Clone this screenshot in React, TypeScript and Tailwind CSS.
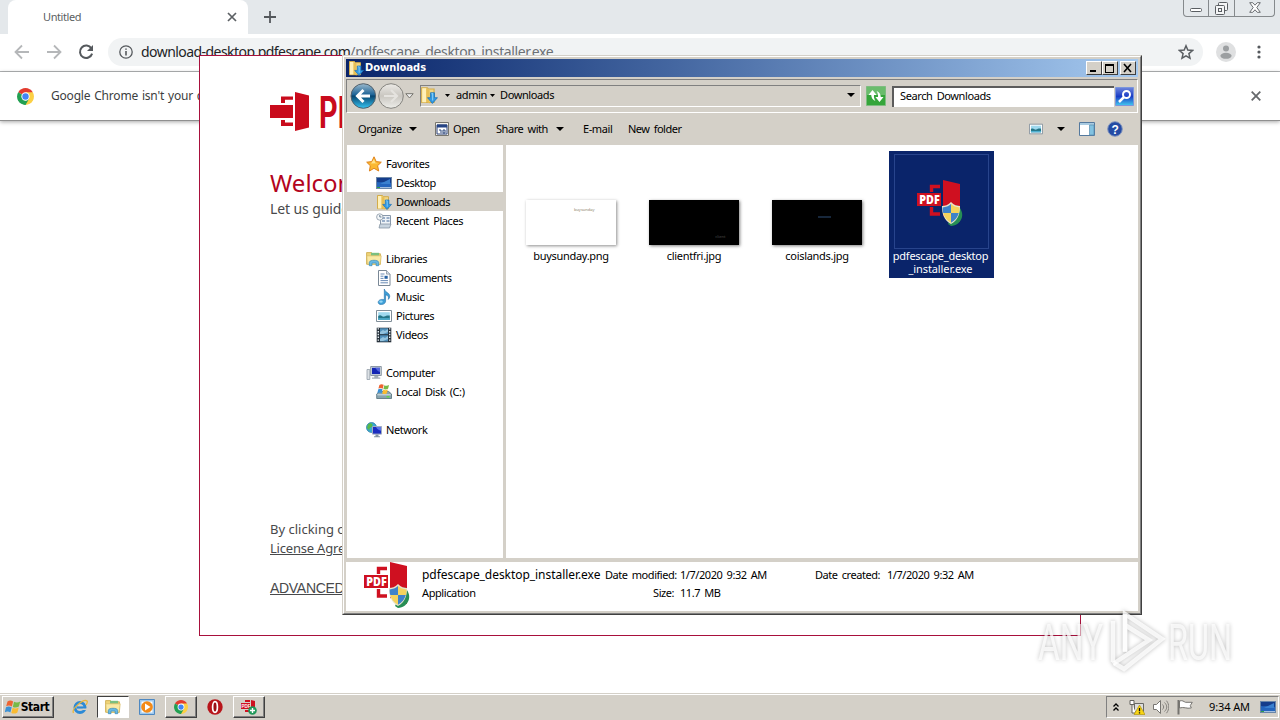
import type { ReactNode } from 'react';
import clsx from 'clsx';

interface BoxProps {
  children?: ReactNode;
  className?: string;
}

// 16x16 icon frame shared by the small glyphs
const Glyph = ({ children, className }: BoxProps) => (
  <svg viewBox="0 0 16 16" className={clsx('shrink-0', className ?? 'h-4 w-4')}>
    {children}
  </svg>
);

const StarIcon = () => (
  <Glyph>
    <path d="M8 .8 10.2 5.6 15.3 6.2 11.6 9.7 12.7 15 8 12.3 3.4 15 4.3 9.7.7 6.2 5.8 5.6Z" fill="#fbb830" stroke="#df831c" strokeWidth="1" />
    <path d="M8 3 9.3 6.7 12 7.2 5 7.5Z" fill="#ffe38b" />
  </Glyph>
);

const DesktopIcon = ({ className }: BoxProps) => (
  <Glyph className={className}>
    <rect x=".5" y="2.5" width="15" height="11" fill="#2465bd" stroke="#6a86a8" />
    <path d="M1 3h14v5C10 6 5 8 1 7Z" fill="#153d8b" />
    <path d="M4 9 14 4v5Z" fill="#3a80cf" />
    <path d="M1 12.5h14" stroke="#a4bfe0" />
    <path d="M1 12.5h3" stroke="#31a049" />
  </Glyph>
);

const DownloadsIcon = ({ className }: BoxProps) => (
  <Glyph className={className}>
    <path d="M1.5 1.5h5l1 1.2h5v12h-11Z" fill="#f0d685" stroke="#d3ac49" />
    <path d="M2 2h3.5v12.5H2Z" fill="#fff0b8" />
    <path d="m5.5 2 3 1.5v12l-3-1.5Z" fill="#e8bf55" />
    <path d="M9.3 6h3.6v4.4h2.6L11 15.5 6.7 10.4h2.6Z" fill="#3099e3" stroke="#1c73b7" strokeWidth=".7" />
    <path d="M10.2 6.8h1v6" stroke="#82cbf6" fill="none" />
  </Glyph>
);

const RecentIcon = () => (
  <Glyph>
    <path d="M4.5 2.5h10v9h-10Z" fill="#eef3f8" stroke="#8999ab" />
    <path d="M6 5h3M10.5 5h3M6 8h3M10.5 8h3" stroke="#7e98b8" strokeWidth="1.6" />
    <path d="M4 11h11l-1.5 4H3Z" fill="#c8d4df" stroke="#7b8b9b" strokeWidth=".7" />
    <circle cx="3.8" cy="4" r="3.2" fill="#f4f7f9" stroke="#8996a3" strokeWidth=".8" />
    <path d="M3.8 2v2h1.7" stroke="#486482" fill="none" strokeWidth=".8" />
  </Glyph>
);

const LibrariesIcon = ({ className }: BoxProps) => (
  <Glyph className={className}>
    <path d="M.6 1.6h5l1 1.2h7.8v10.4H.6Z" fill="#efd477" stroke="#cfae51" strokeWidth=".9" />
    <path d="M5 1.8h8v3H5Z" fill="#7bbf7f" />
    <path d="M.8 4.8h14.4l-.9 8.5H1.3Z" fill="#fae9a4" stroke="#d8ba62" strokeWidth=".7" />
    <path d="M3.3 14.7v-3.2c0-3 9.4-3 9.4 0v3.2h-2.6v-2.6H6v2.6Z" fill="#67b9e4" stroke="#3588b9" strokeWidth=".7" />
  </Glyph>
);

const DocumentIcon = () => (
  <Glyph>
    <path d="M2.5.5h8l3.5 3.6v11.4H2.5Z" fill="#fff" stroke="#7a8896" />
    <path d="M10.5.5v3.6H14" fill="#d2dce7" stroke="#7a8896" strokeWidth=".7" />
    <path d="M4.5 4h4M4.5 6.2h3M4.5 8.4h3M4.5 10.6H12M4.5 12.8H12" stroke="#698bb5" />
    <path d="M8.5 5.8h3.2v3H8.5Z" fill="#2763a4" />
  </Glyph>
);

const MusicIcon = () => (
  <Glyph>
    <path d="M8.3 0c.5 3.5 5.7 3.4 5.4 7.7-.1 1.2-.7 2-1.4 2.7.6-2.6-.3-4-2.7-4.7v6.4c0 4.1-7.4 4.7-7.4 1.2 0-2.4 3.4-3.6 6.1-2.5Z" fill="#3d9fd7" stroke="#1c6ba7" strokeWidth=".6" />
    <ellipse cx="5" cy="12.7" rx="1.8" ry="1.1" fill="#94d6f6" />
  </Glyph>
);

const PicturesIcon = ({ className }: BoxProps) => (
  <Glyph className={className}>
    <path d="M.5 2.5h15v11H.5Z" fill="#fff" stroke="#808e99" />
    <path d="M2.2 4.2h11.6v7.6H2.2Z" fill="#9fd9ee" />
    <path d="M2.2 8c3-2 4 1.5 6 .6s3-1.6 5.6-1v4.2H2.2Z" fill="#247587" />
    <path d="M2.2 10.2h11.6v1.6H2.2Z" fill="#4fafd0" />
  </Glyph>
);

const VideosIcon = () => (
  <Glyph>
    <path d="M.7.7h14.6v14.6H.7Z" fill="#26303a" />
    <path d="M4 1.2h8v6H4ZM4 8.3h8v6.2H4Z" fill="#508fba" />
    <path d="m4 5 3-2 2 1 3-2v3L7 7H4Zm0 7 3-2 2 1 3-2v3l-5 2H4Z" fill="#94c3de" />
    <path d="M2.3 1.2v14M13.7 1.2v14" stroke="#e7eff4" strokeWidth="1.4" strokeDasharray="1.4 1.4" />
  </Glyph>
);

const ComputerIcon = () => (
  <Glyph>
    <path d="M4.7 1.5h10.6v9H4.7Z" fill="#cdd5dd" stroke="#8d99a5" />
    <path d="M6 2.8h8v6.3H6Z" fill="#1425b4" />
    <path d="M9 2.8h5V7C12 7 11 5 9 2.8Z" fill="#5366da" />
    <path d="M8.3 11h4v1.6h2v1.2H6v-1.2h2.3Z" fill="#a3adb8" />
    <path d="M1 4.5h2.8v10H1Z" fill="#dce1e5" stroke="#949faa" strokeWidth=".8" />
  </Glyph>
);

const FlagPanes = () => (
  <g>
    <path d="M2.5 2.5C4.6 1 6.3 1.4 8.1 2.4L6.9 7.5C5 6.4 3.2 6.2 1.2 7.3Z" fill="#ee6432" />
    <path d="M9 2.8c2 1 4.1 1 6.2-.3l-1.3 5c-2 1.2-4.1 1.4-6.1.4Z" fill="#77b947" />
    <path d="M1 8.2c2-1.2 3.9-.9 5.7.1l-1.3 5.1c-1.9-1.1-3.7-1.3-5.7 0Z" fill="#3b91d5" />
    <path d="M7.6 8.7c2 1 4 .9 6.1-.3l-1.3 5c-2.1 1.4-4.2 1.5-6.1.5Z" fill="#f9bb32" />
  </g>
);

const DiskIcon = () => (
  <Glyph>
    <path d="m.7 10 3-2.5h9l2.8 2.5v4.5H.7Z" fill="#89a4af" stroke="#536e79" strokeWidth=".8" />
    <path d="M1.3 10.8h13.5" stroke="#d3e2e7" />
    <path d="M10.5 12.8h3" stroke="#59d949" strokeWidth="1.5" />
    <g transform="translate(1.5 -1) scale(.76)">
      <FlagPanes />
    </g>
  </Glyph>
);

const NetworkIcon = () => (
  <Glyph>
    <circle cx="5.5" cy="5.5" r="5" fill="#38a8d4" stroke="#24759d" strokeWidth=".7" />
    <path d="M2 2.5C5-.5 8 2 5.8 4.7 4.8 6 2.7 5 3.7 8.8L1 6Z" fill="#58b947" />
    <path d="M6.5 4.5h9v7.6h-9Z" fill="#1b2cc0" stroke="#a0acc0" />
    <path d="M10 5h5v3.7C13 8.5 11 7 10 5Z" fill="#5c75e8" />
    <path d="M9.5 12.5h3v1.8h1.5v1H8v-1h1.5Z" fill="#8493a3" />
  </Glyph>
);

const ChromeLogo = ({ className }: BoxProps) => (
  <Glyph className={className}>
    <path d="M8 8 1.1 4A8 8 0 0 1 14.9 4Z" fill="#e33b2e" />
    <path d="M8 8 14.9 4A8 8 0 0 1 8 16Z" fill="#fcd045" />
    <path d="M8 8v8A8 8 0 0 1 1.1 4Z" fill="#22a052" />
    <path d="M8 4h6.9l-3.4 6L8 16l3.4-6Z" fill="#fcd045" />
    <path d="m4.6 10 3.4 2 3.4-2L8 16A8 8 0 0 1 2 7Z" fill="#22a052" />
    <circle cx="8" cy="8" r="3.9" fill="#fff" />
    <circle cx="8" cy="8" r="3" fill="#4285f4" />
  </Glyph>
);

const Shield = () => (
  <g>
    <path d="M40 27c4 3 6 8 5 12-1 5-6 9-11 9l-3-2Z" fill="#278e55" />
    <path d="M34 24c3 3 6 4 9 4 0 8-2 14-9 18-7-4-9-10-9-18 3 0 6-1 9-4Z" fill="#e9e4cb" />
    <path d="M34 26v9h-7.7c-.6-2-.7-3.6-.6-5.6 3-.2 5.8-1.2 8.3-3.4ZM34 35h7.8c-1 4-3.5 7.3-7.8 9.8Z" fill="#3e82ca" />
    <path d="M34 26c2.5 2.2 5.3 3.2 8.4 3.4 0 2 0 3.7-.6 5.6H34ZM34 35v9.8c-4.3-2.5-6.7-5.8-7.7-9.8Z" fill="#f5d35d" />
  </g>
);

const InstallerIcon = ({ className }: BoxProps) => (
  <svg viewBox="0 0 48 48" className={className}>
    <path d="M26 0 43 4v38l-17-6Z" fill="#cf1020" />
    <path d="M14.500 12V6.500H23M14.500 27v7H23" fill="none" stroke="#cf1020" strokeWidth="3.4" />
    <path d="M0 13h24v13H0Z" fill="#cf1020" />
    <text x="2.2" y="23.8" fontFamily="Open Sans, sans-serif" fontWeight="800" fontSize="12" letterSpacing="0" textLength="20.5" lengthAdjust="spacingAndGlyphs" fill="#fff">
      PDF
    </text>
    <g transform="translate(0 -2)">
      <Shield />
    </g>
  </svg>
);

const Caret = ({ className }: BoxProps) => (
  <svg viewBox="0 0 8 4" className={clsx('h-1 w-2 shrink-0', className)}>
    <path d="M0 0h8L4 4Z" fill="currentColor" />
  </svg>
);

const SmallCaret = ({ className }: BoxProps) => (
  <svg viewBox="0 0 5 3" className={clsx('h-[3px] w-[5px] shrink-0', className)}>
    <path d="M0 0h5L2.5 3Z" fill="currentColor" />
  </svg>
);

const CaptionButton = ({ children, className }: BoxProps) => (
  <div className={clsx('flex h-[14px] w-4 items-center justify-center border border-t-white border-l-white border-r-[#404040] border-b-[#404040] bg-[#d4d0c8]', className)}>
    <svg viewBox="0 0 12 10" className="h-[10px] w-3" fill="none" stroke="#000" shapeRendering="crispEdges">
      {children}
    </svg>
  </div>
);

const ChromeWindow = () => (
  <div className="flex h-[693px] flex-col bg-white">
    <div className="flex h-[34px] bg-[#e4e8eb] pl-2">
      <div className="flex w-60 items-center justify-between rounded-t-lg bg-white pr-[11px] pl-[35px]">
        <span className="text-[#5c5f62]">Untitled</span>
        <svg viewBox="0 0 10 10" className="h-[10px] w-[10px]" stroke="#5c6064" strokeWidth="1.7">
          <path d="m1 1 8 8M9 1 1 9" />
        </svg>
      </div>
      <svg viewBox="0 0 12 12" className="mt-[11px] ml-4 h-3 w-3" stroke="#54585c" strokeWidth="1.8">
        <path d="M6 0v12M0 6h12" />
      </svg>
      <div className="mr-[5px] ml-auto flex h-[17px] w-[92px] rounded-b-[4px] border border-t-0 border-[#85898c] text-[#5a5e62]">
        <div className="flex w-[25px] justify-center border-r border-[#85898c]">
          <svg viewBox="0 0 12 4" className="mt-2 h-1 w-3" fill="#fff" stroke="currentColor">
            <rect x=".5" y=".5" width="11" height="3" rx="1" />
          </svg>
        </div>
        <div className="flex w-[26px] justify-center border-r border-[#85898c]">
          <svg viewBox="0 0 13 13" className="mt-[2px] h-[13px] w-[13px]" fill="#f4f5f6" stroke="currentColor">
            <rect x="3.5" y=".5" width="9" height="8" rx="1" />
            <rect x=".5" y="3.5" width="9" height="9" rx="1" />
            <rect x="3.5" y="6.5" width="3" height="3" />
          </svg>
        </div>
        <div className="flex grow justify-center">
          <svg viewBox="0 0 12 11" className="mt-[2px] h-[11px] w-3" fill="#fff" stroke="currentColor" strokeWidth=".9">
            <path d="M.7.7h3L6 3.2 8.3.7h3L7.8 5.5l3.5 4.8h-3L6 7.8l-2.3 2.5h-3l3.5-4.8Z" />
          </svg>
        </div>
      </div>
    </div>
    <div className="flex h-[38px] items-center border-b border-[#b3b5b7] pb-px pl-[14px]">
      <svg viewBox="0 0 16 16" className="h-4 w-4" fill="none" stroke="#b5b7b9" strokeWidth="1.8">
        <path d="M15 8H2M8 1.5 1.5 8 8 14.5" />
      </svg>
      <svg viewBox="0 0 16 16" className="ml-4 h-4 w-4" fill="none" stroke="#b5b7b9" strokeWidth="1.8">
        <path d="M1 8h13M8 1.5 14.5 8 8 14.5" />
      </svg>
      <svg viewBox="0 0 16 16" className="ml-4 h-4 w-4" fill="none" stroke="#55595d" strokeWidth="2">
        <path d="M13.4 4.4A6.2 6.2 0 1 0 14.1 9.6" />
        <path d="M15 1v6H9Z" fill="#55595d" stroke="none" />
      </svg>
      <div className="ml-[14px] flex h-7 w-[1095px] items-center rounded-full bg-[#f1f3f4] pr-[9px] pl-[11px]">
        <svg viewBox="0 0 14 14" className="h-[14px] w-[14px]" fill="none" stroke="#55595d" strokeWidth="1.3">
          <circle cx="7" cy="7" r="6.2" />
          <path d="M7 6v4.5M7 3.4v1.4" strokeWidth="1.6" />
        </svg>
        <span className="ml-2 text-[14px] tracking-[-0.55px] whitespace-nowrap text-[#222426]">
          download-desktop.pdfescape.com<span className="tracking-[-0.38px] text-[#6c7075]">/pdfescape_desktop_installer.exe</span>
        </span>
        <svg viewBox="0 0 16 16" className="ml-auto h-4 w-4" fill="none" stroke="#5a5e62" strokeWidth="1.5">
          <path d="m8 1.8 1.8 4.3 4.7.4-3.6 3.1 1.1 4.6L8 11.8l-4 2.4 1.1-4.6-3.6-3.1 4.7-.4Z" />
        </svg>
      </div>
      <svg viewBox="0 0 20 20" className="ml-[13px] h-5 w-5">
        <circle cx="10" cy="10" r="10" fill="#dfe0e1" />
        <circle cx="10" cy="6.5" r="3" fill="#9c9fa1" />
        <ellipse cx="10" cy="13.8" rx="5.6" ry="3" fill="#9c9fa1" />
      </svg>
      <svg viewBox="0 0 4 14" className="ml-[21px] h-[14px] w-1" fill="#55595d">
        <circle cx="2" cy="2" r="1.6" />
        <circle cx="2" cy="7" r="1.6" />
        <circle cx="2" cy="12" r="1.6" />
      </svg>
    </div>
    <div className="flex h-[49px] items-center border-b border-[#8f8f8f] pr-[19px] pl-[17px] shadow-[0_1px_4px_rgba(0,0,0,0.35)]">
      <ChromeLogo className="h-[17px] w-[17px]" />
      <span className="ml-[17px] text-[12px] tracking-[-0.2px] [word-spacing:1px] whitespace-nowrap text-[#3c3e40]">Google Chrome isn't your default browser</span>
      <svg viewBox="0 0 10 10" className="ml-auto h-[10px] w-[10px]" stroke="#66696c" strokeWidth="1.8">
        <path d="m.7.7 8.6 8.6M9.3.7.7 9.3" />
      </svg>
    </div>
  </div>
);

const SetupWindow = () => (
  <div className="absolute top-[55px] left-[199px] flex h-[581px] w-[882px] flex-col border border-[#a8103c] bg-white pl-[70px] tracking-normal text-[#48494b] [word-spacing:0px]">
    <div className="mt-9 flex h-10">
      <svg viewBox="0 0 40 40" className="h-10 w-10" fill="#c90b1c">
        <path d="M25 0 39 3.5v32L25 39Z" />
        <path d="M0 13h23v13H0Z" />
        <path d="M11 11V4.5h12v3.3h-8V11ZM11 28v6h12v-3.4h-8V28Z" />
      </svg>
      <svg viewBox="0 0 150 40" className="ml-[9px] h-10 w-[150px]">
        <text x="0" y="36" fontFamily="Roboto, sans-serif" fontWeight="700" fontSize="45" textLength="146" lengthAdjust="spacingAndGlyphs" fill="#c90b1c">
          PDFescape
        </text>
      </svg>
    </div>
    <h1 className="mt-[35px] h-8 text-[24px] leading-8 text-[#b30420]">Welcome</h1>
    <p className="h-5 text-[14px] leading-5 tracking-[-0.1px]">Let us guide you</p>
    <p className="mt-[300px] h-5 text-[13px] leading-5">By clicking on</p>
    <p className="h-5 text-[13px] leading-[19px] tracking-[-0.2px] underline">License Agreement</p>
    <p className="mt-[19px] h-5 font-['Liberation_Sans'] text-[14px] leading-5 tracking-[-0.3px] underline">ADVANCED</p>
  </div>
);

const navGroups = [
  {
    label: 'Favorites',
    icon: <StarIcon />,
    items: [
      { label: 'Desktop', icon: <DesktopIcon /> },
      { label: 'Downloads', icon: <DownloadsIcon />, active: true },
      { label: 'Recent Places', icon: <RecentIcon /> },
    ],
  },
  {
    label: 'Libraries',
    icon: <LibrariesIcon />,
    items: [
      { label: 'Documents', icon: <DocumentIcon /> },
      { label: 'Music', icon: <MusicIcon /> },
      { label: 'Pictures', icon: <PicturesIcon /> },
      { label: 'Videos', icon: <VideosIcon /> },
    ],
  },
  { label: 'Computer', icon: <ComputerIcon />, items: [{ label: 'Local Disk (C:)', icon: <DiskIcon /> }] },
  { label: 'Network', icon: <NetworkIcon />, items: [] },
];

const NavPane = () => (
  <div className="flex w-[156px] flex-col gap-[19px] bg-white pt-[9px]">
    {navGroups.map((group) => (
      <div key={group.label}>
        <div className="flex h-[19px] items-center gap-1 pl-[19px]">
          {group.icon}
          <span>{group.label}</span>
        </div>
        {group.items.map((item) => (
          <div key={item.label} className={clsx('flex h-[19px] items-center gap-1 pl-[29px]', 'active' in item && item.active && 'bg-[#d4d0c8]')}>
            {item.icon}
            <span>{item.label}</span>
          </div>
        ))}
      </div>
    ))}
  </div>
);

const FileTile = ({ name, children }: { name: string; children: ReactNode }) => (
  <div className="flex h-[127px] w-[105px] flex-col items-center">
    <div className="flex h-[98px] items-end pb-[4px]">{children}</div>
    <span className="ml-px h-[13px] leading-[13px] tracking-[-0.3px]">{name}</span>
  </div>
);

const FilePane = () => (
  <div className="flex grow gap-[18px] bg-white pt-[6px] pl-[12px]">
    <FileTile name="buysunday.png">
      <div className="flex h-[45px] w-[90px] justify-end bg-white pt-[7px] pr-[21px] text-[4px] leading-[5px] tracking-normal text-[#8b8167] shadow-[1px_1px_3px_rgba(0,0,0,0.45)]">buysunday</div>
    </FileTile>
    <FileTile name="clientfri.jpg">
      <div className="flex h-[45px] w-[90px] items-end justify-end bg-black pr-[13px] pb-[6px] text-[4px] leading-[5px] tracking-normal text-[#4b4b4b] shadow-[1px_1px_3px_rgba(0,0,0,0.5)]">client</div>
    </FileTile>
    <FileTile name="coislands.jpg">
      <div className="flex h-[45px] w-[90px] justify-center bg-black pt-4 pl-4 shadow-[1px_1px_3px_rgba(0,0,0,0.5)]">
        <div className="h-[2px] w-[13px] bg-[#17273b]" />
      </div>
    </FileTile>
    <div className="ml-[2px] flex h-[127px] w-[105px] flex-col items-center bg-[#0a246a] pt-[3px] text-white">
      <div className="mr-[1px] flex h-[95px] w-[95px] items-center justify-center border border-[#28448c]">
        <InstallerIcon className="mt-1 h-12 w-12" />
      </div>
      <span className="mr-[2px] leading-[13px] tracking-[-0.25px]">pdfescape_desktop</span>
      <span className="mr-[2px] leading-[13px] tracking-[-0.1px]">_installer.exe</span>
    </div>
  </div>
);

const ExplorerWindow = () => (
  <div className="absolute top-[55px] left-[342px] flex h-[560px] w-[800px] flex-col border border-t-[#d4d0c8] border-r-[#404040] border-b-[#404040] border-l-[#d4d0c8] bg-[#d4d0c8] whitespace-nowrap text-black">
    <div className="flex grow flex-col border border-t-white border-r-[#808080] border-b-[#808080] border-l-white p-[2px]">
      <div className="flex h-[18px] items-center bg-linear-to-r from-[#0a246a] to-[#a6caf0] pr-[2px] pl-[2px]">
        <DownloadsIcon />
        <span className="ml-[1px] font-['DejaVu_Sans_Condensed','Noto_Sans'] text-[11px] font-bold tracking-normal text-white">Downloads</span>
        <CaptionButton className="ml-auto">
          <path d="M2 8h6" strokeWidth="2" />
        </CaptionButton>
        <CaptionButton>
          <path d="M1.5 1v8.5h8V1M1 1h9" strokeWidth="1" />
          <path d="M1 1.5h9" strokeWidth="2" />
        </CaptionButton>
        <CaptionButton className="ml-[2px]">
          <path d="m2 1 7 8M9 1 2 9" strokeWidth="1.6" shapeRendering="auto" />
        </CaptionButton>
      </div>
      <div className="mt-[2px] flex h-[34px] items-center border border-[#808080] border-r-white border-b-white pl-[3px]">
        <svg viewBox="0 0 54 28" className="h-7 w-[54px] shrink-0">
          <defs>
            <linearGradient id="back" x2="0" y2="1">
              <stop offset="0" stopColor="#9ab9cd" />
              <stop offset=".45" stopColor="#1d6396" />
              <stop offset=".5" stopColor="#07446f" />
              <stop offset="1" stopColor="#35c4f2" />
            </linearGradient>
            <linearGradient id="fwd" x2="0" y2="1">
              <stop offset="0" stopColor="#eceae6" />
              <stop offset=".5" stopColor="#c9c6c0" />
              <stop offset="1" stopColor="#eeeeea" />
            </linearGradient>
          </defs>
          <circle cx="13.3" cy="14" r="12.3" fill="url(#back)" stroke="#53606b" />
          <circle cx="41" cy="14" r="12.3" fill="url(#fwd)" stroke="#85847f" />
          <path d="M20 14H8m5.5-6-6 6 6 6" fill="none" stroke="#fff" strokeWidth="3" />
          <path d="M34 14h13m-6-6 6 6-6 6" fill="none" stroke="#e5e3df" strokeWidth="2.2" />
        </svg>
        <svg viewBox="0 0 9 6" className="ml-[1px] h-[6px] w-[9px] shrink-0" fill="#eee" stroke="#77756f">
          <path d="M.8.7h7.4L4.5 5Z" />
        </svg>
        <div className="ml-[6px] flex h-[22px] w-[441px] shrink-0 items-center border border-[#808080] border-r-white border-b-white pr-[5px] pb-[2px]">
          <DownloadsIcon className="-ml-px h-[18px] w-[18px]" />
          <SmallCaret className="ml-[7px]" />
          <span className="ml-[6px] w-[30px]">admin</span>
          <SmallCaret className="ml-[4px]" />
          <span className="ml-[5px]">Downloads</span>
          <Caret className="ml-auto" />
        </div>
        <svg viewBox="0 0 20 20" className="ml-[5px] h-5 w-5 shrink-0">
          <path d="M.5.5h19v19H.5Z" fill="#35a53a" stroke="#7ebc80" />
          <path d="M1 1h18v8H1Z" fill="#6abc6c" />
          <path d="M6.5 4 2.5 9h2.7c.2 3 1.5 4.7 4.2 6C8 12.5 7.8 11 8 9h2.6ZM13.5 16l4-5h-2.7c-.2-3-1.5-4.7-4.2-6C12 7.5 12.2 9 12 11H9.4Z" fill="#fff" />
        </svg>
        <div className="ml-[6px] flex h-[21px] w-[222px] shrink-0 items-center border-t-2 border-l-2 border-[#5c5c5c] bg-white pb-[2px] pl-[6px]">Search Downloads</div>
        <svg viewBox="0 0 19 19" className="ml-[1px] h-[19px] w-[19px] shrink-0">
          <defs>
            <linearGradient id="find" x2="0" y2="1">
              <stop stopColor="#6f86dc" />
              <stop offset=".5" stopColor="#183bc4" />
              <stop offset="1" stopColor="#42caf0" />
            </linearGradient>
          </defs>
          <path d="M.5.5h18v18H.5Z" fill="url(#find)" stroke="#7b96dc" />
          <circle cx="11.5" cy="7.5" r="3.5" fill="none" stroke="#fff" strokeWidth="2" />
          <path d="m9 10-5 5" stroke="#fff" strokeWidth="2.5" />
        </svg>
      </div>
      <div className="flex h-8 items-center pr-[15px] pl-3">
        <span className="w-[44px]">Organize</span>
        <Caret className="ml-[7px]" />
        <svg viewBox="0 0 14 14" className="ml-[18px] h-[14px] w-[14px]">
          <path d="M.5.5h13v13H.5Z" fill="#f3f2ec" stroke="#77756e" />
          <path d="M2 3h10v9H2Z" fill="#fff" stroke="#2c437b" />
          <path d="M2 2.5h10v3H2Z" fill="#254384" />
          <path d="M4 8h2v3M8 8h2v3H8Z" fill="none" stroke="#28447b" />
        </svg>
        <span className="ml-[4px] w-[43px]">Open</span>
        <span className="w-[52px] tracking-[-0.45px]">Share with</span>
        <Caret className="ml-2" />
        <span className="ml-[19px] w-[45px]">E-mail</span>
        <span className="tracking-[-0.5px]">New folder</span>
        <PicturesIcon className="ml-auto h-[14px] w-[14px]" />
        <Caret className="ml-[14px]" />
        <svg viewBox="0 0 16 14" className="ml-[14px] h-[14px] w-4">
          <path d="M.5.5h15v13H.5Z" fill="#fff" stroke="#54799e" />
          <path d="M1 1h14v2H1Z" fill="#a9cbe1" />
          <path d="M10.5 3h4.5v10h-4.5Z" fill="#82c2e1" stroke="#588eaf" strokeWidth=".7" />
        </svg>
        <svg viewBox="0 0 16 16" className="ml-3 h-4 w-4">
          <circle cx="8" cy="8" r="7.3" fill="#244ba4" stroke="#8396bf" />
          <text x="8" y="12.5" textAnchor="middle" fontFamily="Liberation Sans, sans-serif" fontWeight="bold" fontSize="12" fill="#fff">?</text>
        </svg>
      </div>
      <div className="flex h-[413px] pl-[1px]">
        <NavPane />
        <div className="w-[3px] bg-[#d4d0c8]" />
        <FilePane />
      </div>
      <div className="mt-[4px] flex h-[49px] bg-white pl-[18px]">
        <InstallerIcon className="h-12 w-12" />
        <div className="ml-[10px] w-[183px] pt-1">
          <p className="text-[12px] leading-[18px] tracking-[-0.05px]">pdfescape_desktop_installer.exe</p>
          <p className="leading-[18px]">Application</p>
        </div>
        <div className="grid h-[40px] grid-cols-[71px_131px_68px_100px] content-start gap-x-1 pt-[4px] leading-[18px] tracking-[-0.45px]">
          <span className="pr-[2px] text-right">Date modified:</span>
          <span>1/7/2020 9:32 AM</span>
          <span>Date created:</span>
          <span>1/7/2020 9:32 AM</span>
          <span className="pr-[2px] text-right">Size:</span>
          <span>11.7 MB</span>
        </div>
      </div>
    </div>
  </div>
);

const Watermark = () => (
  <svg viewBox="0 0 204 70" className="absolute top-[605px] left-[1034px] h-[70px] w-[204px] drop-shadow-[0_0_2px_rgba(0,0,0,0.32)]">
    <g fill="#fff" fillOpacity=".75" fontFamily="Roboto, sans-serif" fontWeight="400" fontSize="50" letterSpacing="0">
      <text x="4" y="55" textLength="65" lengthAdjust="spacingAndGlyphs">ANY</text>
      <text x="134" y="55" textLength="64" lengthAdjust="spacingAndGlyphs">RUN</text>
    </g>
    <g fill="none" stroke="#fff" strokeOpacity=".8" strokeWidth="4.5">
      <path d="M79 57V16M91 46V9l37 25-38 30-10-6" />
      <path d="m91 20 24 15-36 24M91 9v38" />
    </g>
  </svg>
);

const TaskButton = ({ children, className }: BoxProps) => (
  <div className={clsx('flex h-[22px] w-8 items-center justify-center border border-t-white border-l-white border-r-[#404040] border-b-[#404040] shadow-[inset_-1px_-1px_0_#808080]', className)}>
    {children}
  </div>
);

const Taskbar = () => (
  <div className="flex h-[27px] items-start border-t border-[#d4d0c8] bg-[#d4d0c8] text-black">
    <div className="flex h-[26px] w-full items-start border-t border-white pt-px">
      <TaskButton className="ml-[2px] w-[52px]! shrink-0 pr-[2px]">
        <Glyph>
          <FlagPanes />
        </Glyph>
        <span className="font-['DejaVu_Sans_Condensed','Noto_Sans'] text-[12px] font-bold tracking-[-0.4px]">Start</span>
      </TaskButton>
      <Glyph className="mt-[3px] ml-[18px] h-4 w-4">
        <circle cx="8" cy="8.5" r="5" fill="none" stroke="#2c8ad6" strokeWidth="3" />
        <path d="M5 8.5h9" stroke="#2c8ad6" strokeWidth="2.2" />
        <path d="M1.5 14C-1 10 12-1 15 2c1 1-.4 3-1 4" fill="none" stroke="#e9b63b" strokeWidth="1.3" />
        <path d="M10 11h5v-1.4h-4Z" fill="#d4d0c8" />
      </Glyph>
      <div className="ml-[9px] flex h-[22px] w-8 items-center justify-center border border-t-[#404040] border-l-[#404040] border-r-white border-b-white bg-white">
        <LibrariesIcon />
      </div>
      <Glyph className="mt-[3px] ml-[10px] h-4 w-4">
        <path d="M.5.5h15v15H.5Z" fill="#9fc9ee" stroke="#4e88c1" />
        <path d="M2.5 2.5h11v11h-11Z" fill="#fff" />
        <circle cx="8" cy="8" r="5.8" fill="#f38a18" />
        <path d="m6 4.5 5.5 3.5L6 11.5Z" fill="#fff" />
      </Glyph>
      <TaskButton className="ml-[10px]">
        <ChromeLogo className="h-[14px] w-[14px]" />
      </TaskButton>
      <Glyph className="mt-[3px] ml-[10px] h-4 w-4">
        <circle cx="8" cy="8" r="7.7" fill="#b8151b" />
        <ellipse cx="8" cy="8" rx="2.4" ry="5.3" fill="#9c1016" stroke="#fff" strokeWidth="1.7" />
      </Glyph>
      <TaskButton className="ml-[10px]">
        <Glyph>
          <path d="M0 4h9v6H0ZM10 1l4 1v12l-4-1ZM4 1h5v2H4ZM4 11h5v2H4Z" fill="#cf1020" />
          <text x=".5" y="9" fontFamily="Liberation Sans, sans-serif" fontWeight="bold" fontSize="4.5" letterSpacing="0" fill="#fff">PDF</text>
          <circle cx="11.5" cy="11.5" r="4.3" fill="#20985a" />
          <path d="M11.5 9v5M9 11.5h5" stroke="#fff" strokeWidth="1.4" />
        </Glyph>
      </TaskButton>
      <div className="mr-px ml-auto flex h-[22px] w-[173px] items-center border border-[#808080] border-r-white border-b-white pl-[6px]">
        <svg viewBox="0 0 6 8" className="h-2 w-[6px]" fill="none" stroke="#000" strokeWidth="1.3">
          <path d="m.5 3.5 2.5-2.5 2.5 2.5M.5 7.5 3 5l2.5 2.5" />
        </svg>
        <Glyph className="ml-[10px] h-4 w-4">
          <path d="M5.5 4.5h9v8h-9Z" fill="#ddd" stroke="#686864" />
          <path d="M1 1.5h4v4H1ZM3 5v9h4" fill="#fff" stroke="#63635f" />
          <path d="M10.5 6 16 15.5H5Z" fill="#f8d413" stroke="#a78b00" strokeWidth=".6" />
          <path d="M10.5 9v3.3M10.5 13.3v1.2" stroke="#111" strokeWidth="1.3" />
        </Glyph>
        <Glyph className="ml-2 h-4 w-4">
          <path d="M.5 5.5h3l4-4v13l-4-4h-3Z" fill="#fff" stroke="#777571" />
          <path d="M9.5 5.5c1.5 1.5 1.5 3.5 0 5M11.5 3.5c3 3 3 6 0 9M13.5 1.7c3 4 3 8.5 0 12.5" fill="none" stroke="#85827d" />
        </Glyph>
        <Glyph className="ml-2 h-4 w-4">
          <path d="M1.5 1v14.5" stroke="#75736f" strokeWidth="2" />
          <path d="M2.5 2c3-1 4 .5 6 1.3h6.8l-2 3.2 1 2.5c-5 1-7-1.5-11.8 0Z" fill="#fff" stroke="#777571" />
        </Glyph>
        <span className="ml-4 w-[41px] tracking-[-0.1px] whitespace-nowrap [word-spacing:0px]">9:34 AM</span>
        <DesktopIcon className="ml-[10px] h-4 w-4" />
      </div>
    </div>
  </div>
);

export default function App() {
  return (
    <div className="relative h-[720px] w-[1280px] overflow-hidden bg-white font-['Noto_Sans',sans-serif] text-[11px] leading-[14px] tracking-[-0.4px] [word-spacing:1.8px]">
      <ChromeWindow />
      <Taskbar />
      <SetupWindow />
      <ExplorerWindow />
      <Watermark />
    </div>
  );
}
